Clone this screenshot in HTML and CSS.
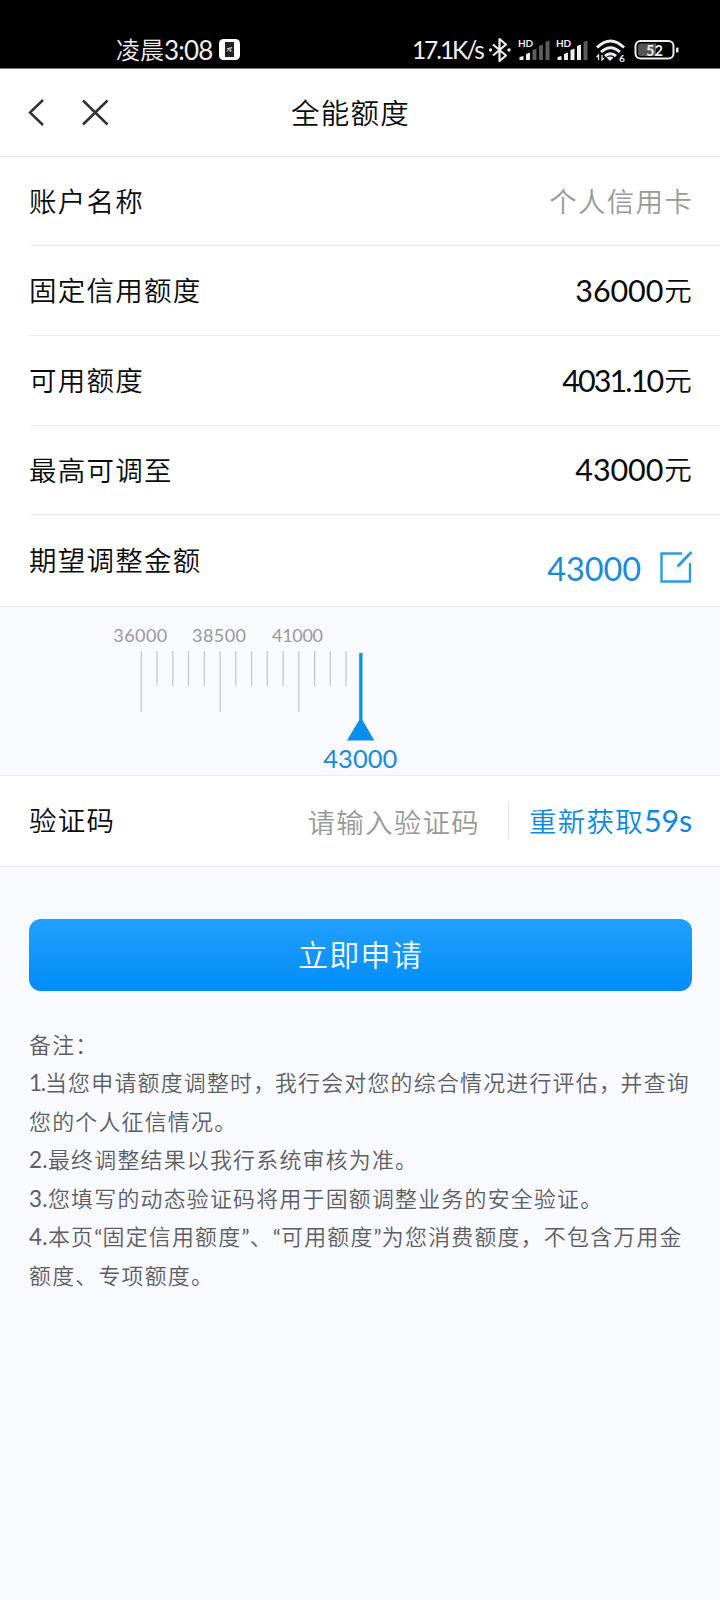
FILE: index.html
```html
<!DOCTYPE html>
<html lang="zh-CN">
<head>
<meta charset="utf-8">
<title>全能额度</title>
<link rel="stylesheet" href="styles.css">
</head>
<body>
<div class="status">
  <span class="clock">凌晨<span class="clock-num">3:08</span></span>
  <svg class="app-badge" width="21" height="21" viewBox="0 0 21 21">
    <rect width="21" height="21" rx="4.5" fill="#fff"/>
    <rect x="6" y="3" width="9" height="15" fill="#222"/>
    <path d="M8 9.5h2M8 12.500l2-3M11 8v5M13 8l-2 2.500 2 2" stroke="#ddd" fill="none"/>
  </svg>
  <span class="speed">17.1K/s</span>
  <svg class="status-icons" width="204" height="32" viewBox="486 34 204 32">
    <path d="M493 44.500l13 11-6.500 5.500V39l6.500 5.500-13 11" fill="none" stroke="#eee" stroke-width="2.200" stroke-linejoin="round"/>
    <circle cx="490.500" cy="50" r="1.700" fill="#eee"/><circle cx="509" cy="50" r="1.700" fill="#eee"/>
    <text class="tiny" x="518" y="47" textLength="15">HD</text>
    <g fill="#eee"><path d="M519.500 57l4-1v4h-4zM526 54l4-1.500V60h-4z"/></g>
    <g fill="#5c5c5c"><path d="M532.500 50l4-1.500V60h-4zM539 46l4-1.500V60h-4zM545.500 42l4-1.500V60h-4z"/></g>
    <text class="tiny" x="556" y="47" textLength="15">HD</text>
    <g fill="#eee"><path d="M557.500 57l4-1v4h-4zM564 54l4-1.500V60h-4zM570.500 50l4-1.500V60h-4zM577 46l4-1.500V60h-4z"/></g>
    <path d="M583.500 42l4-1.500V60h-4z" fill="#5c5c5c"/>
    <g fill="none" stroke="#eee" stroke-width="3">
      <path d="M597 47.500Q610.500 34.500 624 47.500"/><path d="M601 52Q610.500 43.500 620 52"/><path d="M605 56Q610.500 51.500 616 56"/>
      <path d="M598.500 60v-5l-2 2M602 55v5l2-2" stroke-width="1.300"/>
    </g>
    <path d="M606.500 57.500q4-2 7 0l-3.500 3.500z" fill="#eee"/>
    <text class="wifi-num" x="619" y="61.500">6</text>
    <rect x="635.500" y="41" width="38" height="17.500" rx="5" fill="none" stroke="#eee" stroke-width="2"/>
    <path d="M641 43.500h15v12.500h-15q-3 0-3-3v-6.500q0-3 3-3z" fill="#555"/>
    <rect x="676" y="47.500" width="2.500" height="5" rx="1" fill="#eee"/>
    <text class="battery" x="646" y="55.500" textLength="17">52</text>
  </svg>
</div>

<header class="nav">
  <svg class="nav-icons" width="84" height="30" viewBox="26 97 84 30">
    <path d="M43 100L30 112.500L43 125M83 100.500L107.500 124.500M107.500 100.500L83 124.500" fill="none" stroke="#333" stroke-width="2.500"/>
  </svg>
  <h1 class="title">全能额度</h1>
</header>

<main>
  <section class="list">
    <div class="row"><span>账户名称</span><span class="muted">个人信用卡</span></div>
    <div class="row"><span>固定信用额度</span><span class="value"><b class="num">36000</b>元</span></div>
    <div class="row"><span>可用额度</span><span class="value"><b class="num decimal">4031.10</b>元</span></div>
    <div class="row"><span>最高可调至</span><span class="value"><b class="num">43000</b>元</span></div>
    <div class="row expected"><span>期望调整金额</span>
      <span class="edit"><b class="num">43000</b>
        <svg width="34" height="34" viewBox="0 0 34 34" fill="none" stroke="#2c9be6" stroke-width="2.400">
          <path d="M23 3.500H2.500V31.500H31V13"/><path d="M18.500 16.500L32.500 2" stroke-width="2.800"/>
        </svg>
      </span>
    </div>
  </section>

  <section class="ruler">
    <svg width="720" height="168" viewBox="0 607 720 168">
      <g class="scale-label"><text x="140.300" y="641.500" textLength="54">36000</text><text x="219" y="641.500" textLength="54">38500</text><text x="297.500" y="641.500" textLength="51">41000</text></g>
      <path d="M141.300 651V712M220.100 651V712M298.800 651V712M157 651V686M172.800 651V686M188.500 651V686M204.300 651V686M235.800 651V686M251.600 651V686M267.300 651V686M283.100 651V686M314.600 651V686M330.300 651V686M346 651V686" stroke="#c4c5c9" stroke-width="1.200"/>
      <path d="M359.200 653h3.300V720L374.300 740.500H347L359.200 720z" fill="#088fee"/>
      <text class="current" x="360.300" y="767.500" textLength="74">43000</text>
    </svg>
  </section>

  <section class="verify">
    <span class="verify-label">验证码</span>
    <span class="placeholder">请输入验证码</span>
    <span class="resend">重新获取<b class="num">59s</b></span>
  </section>

  <button class="submit">立即申请</button>

  <section class="notes">
    <p>备注：</p>
    <p><i class="first">1.</i>当您申请额度调整时<span class="comma">，</span>我行会对您的综合情况进行评估<span class="comma">，</span>并查询<br>您的个人征信情况。</p>
    <p><i>2.</i>最终调整结果以我行系统审核为准。</p>
    <p><i>3.</i>您填写的动态验证码将用于固额调整业务的安全验证。</p>
    <p><i>4.</i>本页<q>固定信用额度</q>、<q>可用额度</q>为您消费额度，不包含万用金<br>额度、专项额度。</p>
  </section>
</main>
</body>
</html>
```
FILE: styles.css
```css
* { box-sizing: border-box; }
body {
  margin: 0;
  width: 720px;
  height: 1600px;
  overflow: hidden;
  background: #f8faff;
  color: #0a0a0a;
  font: 27.5px/40px "Noto Sans CJK SC", sans-serif;
  font-weight: 350;
  letter-spacing: 1.25px;
  white-space: nowrap;
}
.num { font-family: Lato, sans-serif; font-weight: 400; }

.status {
  display: flex;
  height: 69px;
  padding: 33px 30px 0 116px;
  background: #000;
  color: #eee;
  font-size: 24px;
  line-height: 32px;
  letter-spacing: 0;
  border-bottom: 1px solid #777;
}
.clock { width: 103px; }
.clock-num { font: 400 26px/32px Lato, sans-serif; letter-spacing: -.8px; vertical-align: -1px; }
.app-badge { margin-top: 6px; }
.speed { width: 74px; margin: 0 0 0 172px; font: 400 24.500px/34px Lato, sans-serif; letter-spacing: -2.100px; }
.status-icons { flex: none; margin-top: 1px; }
.tiny { font: 700 10px Lato, sans-serif; fill: #eee; letter-spacing: 0; }
.wifi-num { font: 700 10px Lato, sans-serif; fill: #eee; }
.battery { font: 700 14.500px Lato, sans-serif; fill: #eee; letter-spacing: 0; }

.nav {
  display: grid;
  grid-template-columns: 110px 1fr 110px;
  align-items: center;
  height: 88px;
  padding-bottom: 2px;
  background: #fff;
  border-bottom: 1px solid #e4e4e4;
}
.nav-icons { margin-left: 26px; }
.title { margin: 0 0 0 -19px; text-align: center; font-size: 28.500px; font-weight: 350; letter-spacing: 1.2px; }

.list { padding-left: 29px; background: #fff; border-bottom: 1px solid #ebecef; }
.row {
  display: flex;
  justify-content: space-between;
  align-items: center;
  height: 89.800px;
  padding: 0 27px 2px 0;
  border-bottom: 1px solid #ebecee;
}
.row:first-child { height: 89px; padding-bottom: 3px; }
.row:last-child { height: 90.600px; padding-bottom: 4px; border-bottom: 0; }
.value .num { font-size: 30.500px; letter-spacing: -.1px; margin-right: 1px; vertical-align: -1px; }
.value .decimal { letter-spacing: -1.900px; margin-right: 2px; }
.muted { color: #999; }
.edit { display: flex; align-items: center; gap: 18px; padding-top: 16px; color: #188bdc; }
.edit .num { font-size: 32.500px; letter-spacing: -.1px; padding-top: 4px; }

.ruler { height: 169px; border-bottom: 1px solid #ebecef; }
.ruler svg { display: block; }
.scale-label text { font: 18px Lato, sans-serif; fill: #999; text-anchor: middle; letter-spacing: 0; }
.current { font: 25.500px Lato, sans-serif; fill: #188bdc; text-anchor: middle; letter-spacing: 0; }

.verify {
  display: flex;
  align-items: center;
  height: 91px;
  padding: 0 28px 0 29px;
  background: #fff;
  border-bottom: 1px solid #ebecef;
}
.verify-label { padding-bottom: 3px; }
.placeholder { margin-left: auto; padding-right: 28px; color: #999; }
.resend { padding-left: 20px; border-left: 1px solid #e4e5e8; color: #0c88e0; line-height: 37px; }
.resend .num { font-size: 30.500px; letter-spacing: -.2px; }

.submit {
  display: block;
  width: 663px;
  height: 72px;
  margin: 52px 0 0 29px;
  padding: 0 0 3px;
  border: 0;
  border-radius: 12px;
  background: linear-gradient(#239fff, #008df8);
  color: #fff;
  font: 350 30px/69px "Noto Sans CJK SC", sans-serif;
  letter-spacing: 1.3px;
}
.notes { padding: 34px 0 0 29px; color: #5d5e62; font-size: 21.900px; line-height: 38.500px; letter-spacing: 1.250px; }
.notes p { margin: 0; }
.notes i { font: 400 22.500px Lato, sans-serif; letter-spacing: .3px; }
.notes .first { letter-spacing: -1.200px; }
.comma { margin-right: -1.500px; }
.notes q { quotes: "“" "”"; }
.notes q::before, .notes q::after { font: 400 22px Lato, sans-serif; letter-spacing: .2px; }
```
